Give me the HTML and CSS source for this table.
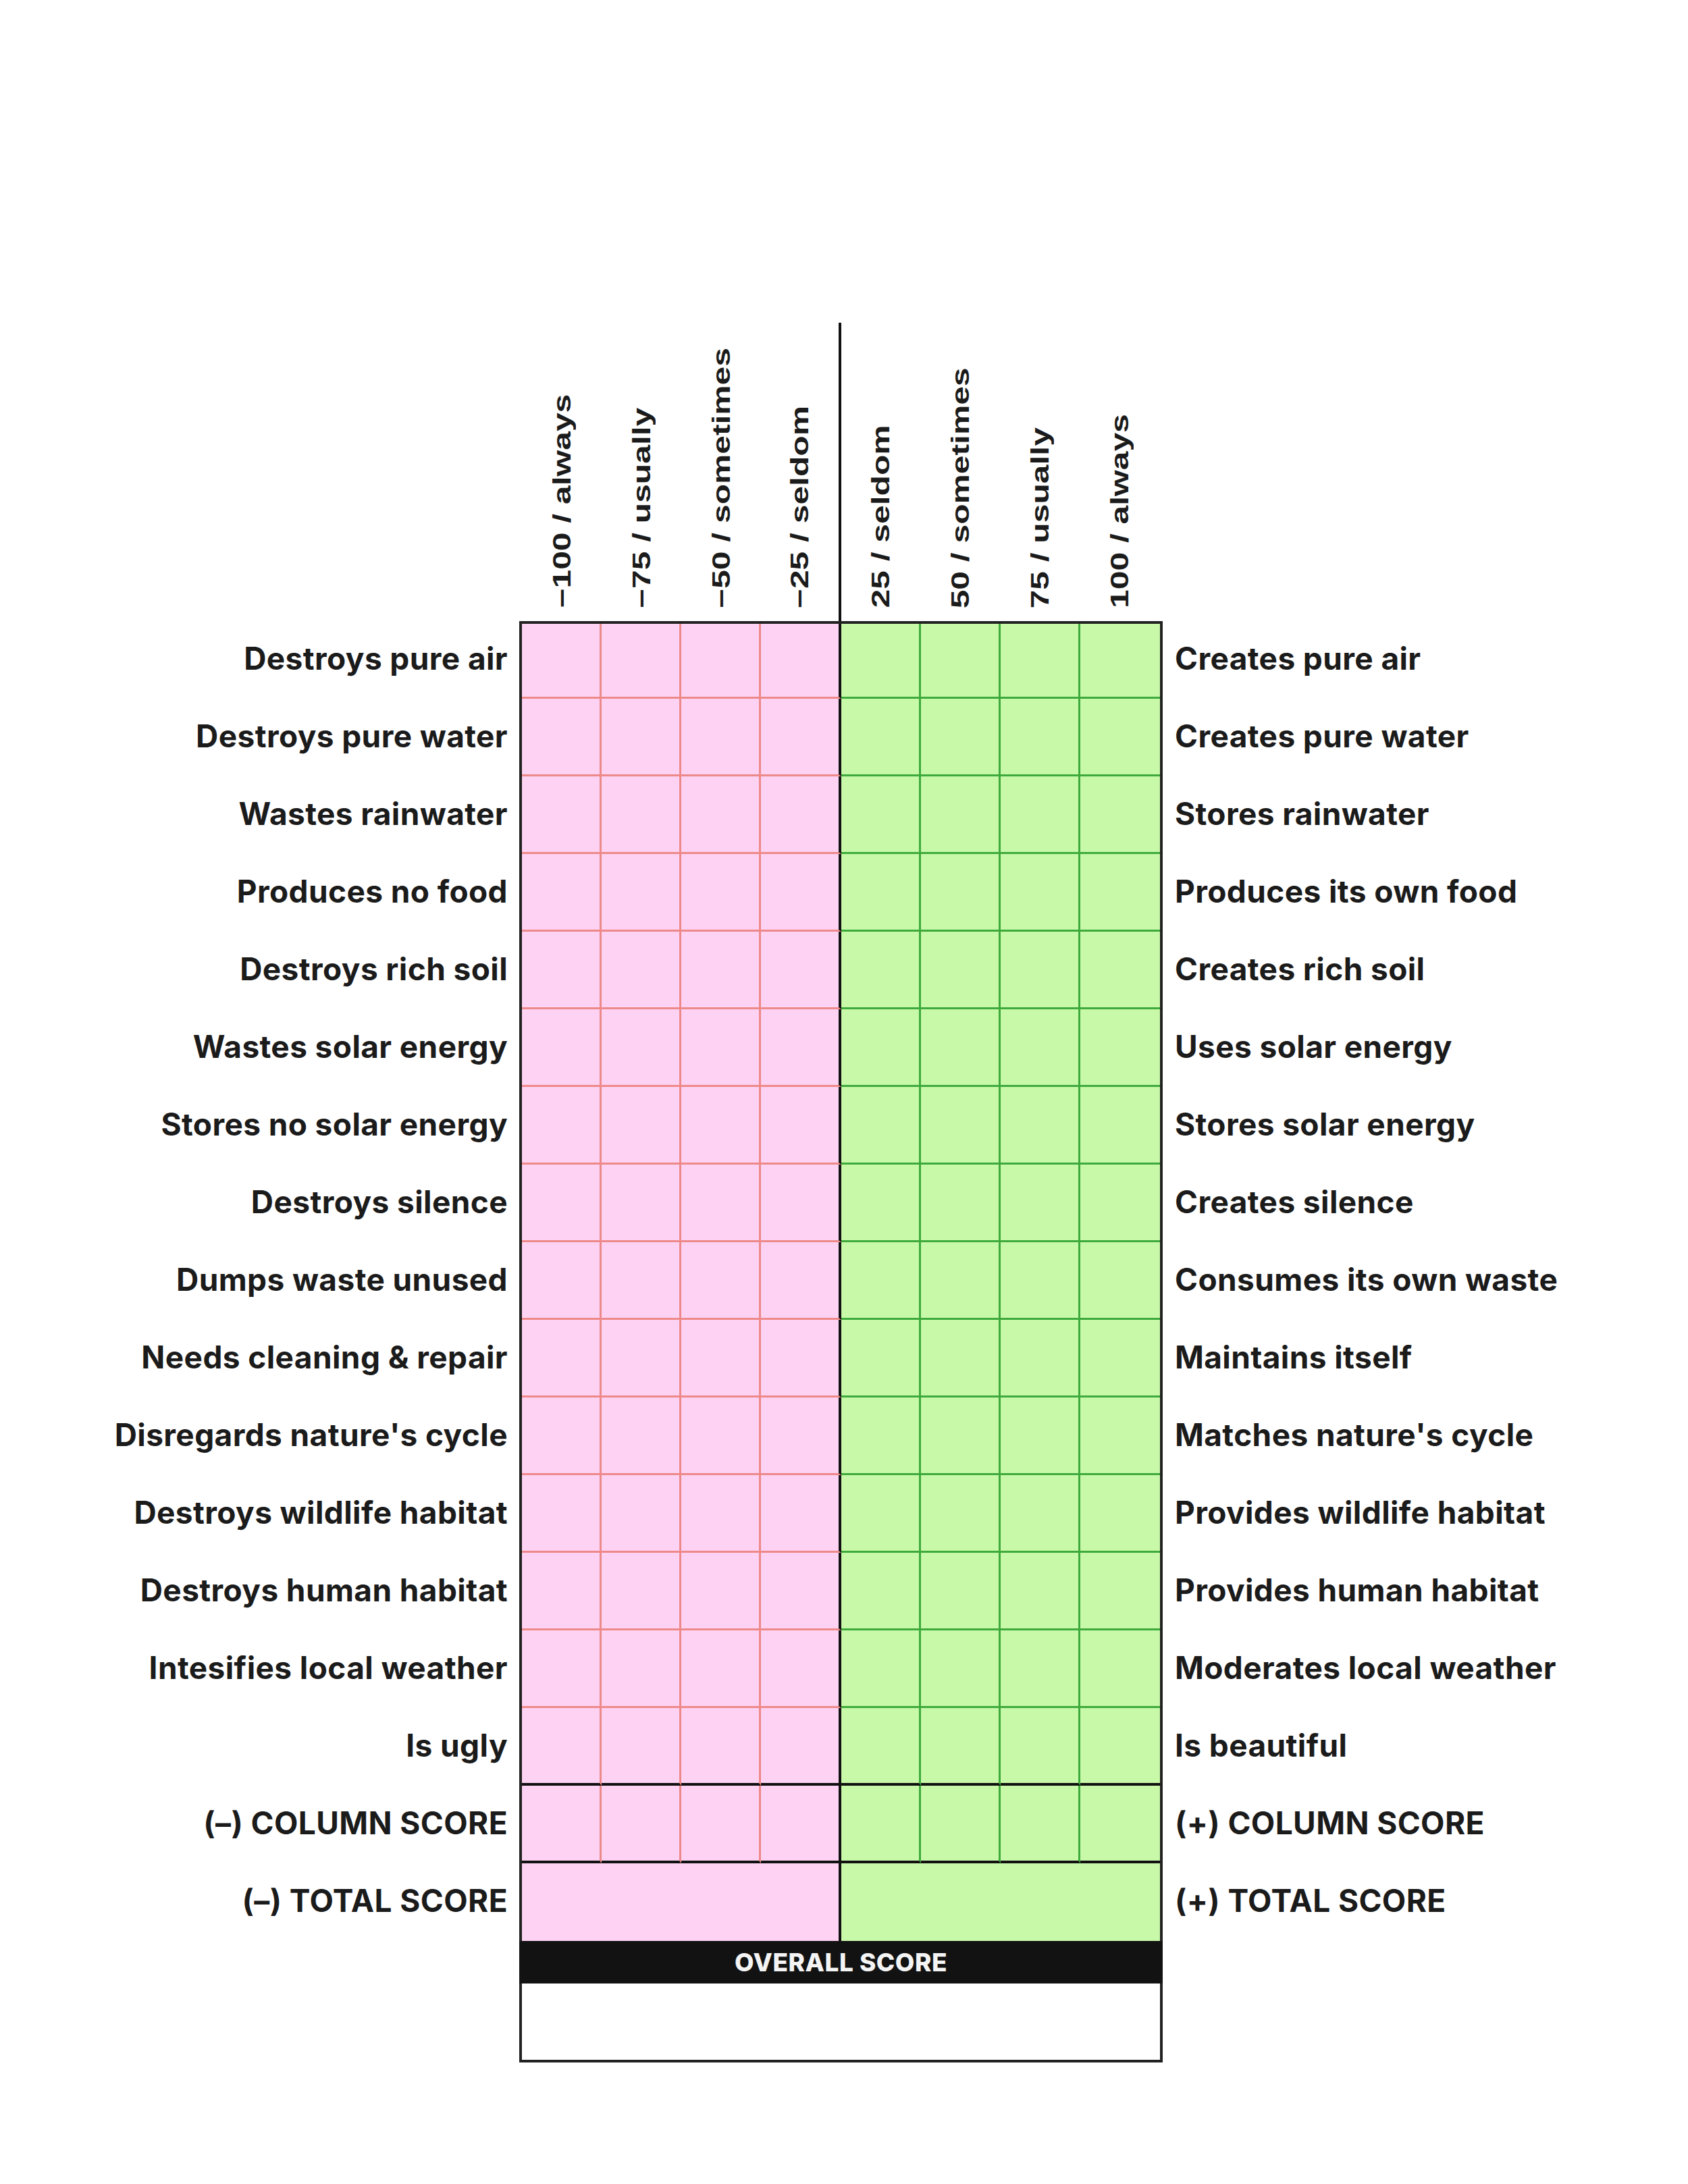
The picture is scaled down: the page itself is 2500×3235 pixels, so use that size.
FILE: index.html
```html
<!DOCTYPE html>
<html lang="en">
<head>
<meta charset="utf-8">
<title>Building performance scorecard</title>
<link rel="stylesheet" href="styles.css">
</head>
<body>
<main class="sheet">
  <div class="head">
    <div></div>
    <div class="head-cols">
      <div class="hcol"><div class="hl"><span>−100 / always</span></div></div>
      <div class="hcol"><div class="hl"><span>−75 / usually</span></div></div>
      <div class="hcol"><div class="hl"><span>−50 / sometimes</span></div></div>
      <div class="hcol mid"><div class="hl"><span>−25 / seldom</span></div></div>
      <div class="hcol"><div class="hl"><span>25 / seldom</span></div></div>
      <div class="hcol"><div class="hl"><span>50 / sometimes</span></div></div>
      <div class="hcol"><div class="hl"><span>75 / usually</span></div></div>
      <div class="hcol"><div class="hl"><span>100 / always</span></div></div>
    </div>
  </div>

  <div class="row first">
    <div class="lab lab-l">Destroys pure air</div>
    <div class="cells"><i class="c n"></i><i class="c n"></i><i class="c n"></i><i class="c n"></i><i class="c p"></i><i class="c p"></i><i class="c p"></i><i class="c p"></i></div>
    <div class="lab lab-r">Creates pure air</div>
  </div>
  <div class="row">
    <div class="lab lab-l">Destroys pure water</div>
    <div class="cells"><i class="c n"></i><i class="c n"></i><i class="c n"></i><i class="c n"></i><i class="c p"></i><i class="c p"></i><i class="c p"></i><i class="c p"></i></div>
    <div class="lab lab-r">Creates pure water</div>
  </div>
  <div class="row">
    <div class="lab lab-l">Wastes rainwater</div>
    <div class="cells"><i class="c n"></i><i class="c n"></i><i class="c n"></i><i class="c n"></i><i class="c p"></i><i class="c p"></i><i class="c p"></i><i class="c p"></i></div>
    <div class="lab lab-r">Stores rainwater</div>
  </div>
  <div class="row">
    <div class="lab lab-l">Produces no food</div>
    <div class="cells"><i class="c n"></i><i class="c n"></i><i class="c n"></i><i class="c n"></i><i class="c p"></i><i class="c p"></i><i class="c p"></i><i class="c p"></i></div>
    <div class="lab lab-r">Produces its own food</div>
  </div>
  <div class="row">
    <div class="lab lab-l">Destroys rich soil</div>
    <div class="cells"><i class="c n"></i><i class="c n"></i><i class="c n"></i><i class="c n"></i><i class="c p"></i><i class="c p"></i><i class="c p"></i><i class="c p"></i></div>
    <div class="lab lab-r">Creates rich soil</div>
  </div>
  <div class="row">
    <div class="lab lab-l">Wastes solar energy</div>
    <div class="cells"><i class="c n"></i><i class="c n"></i><i class="c n"></i><i class="c n"></i><i class="c p"></i><i class="c p"></i><i class="c p"></i><i class="c p"></i></div>
    <div class="lab lab-r">Uses solar energy</div>
  </div>
  <div class="row">
    <div class="lab lab-l">Stores no solar energy</div>
    <div class="cells"><i class="c n"></i><i class="c n"></i><i class="c n"></i><i class="c n"></i><i class="c p"></i><i class="c p"></i><i class="c p"></i><i class="c p"></i></div>
    <div class="lab lab-r">Stores solar energy</div>
  </div>
  <div class="row">
    <div class="lab lab-l">Destroys silence</div>
    <div class="cells"><i class="c n"></i><i class="c n"></i><i class="c n"></i><i class="c n"></i><i class="c p"></i><i class="c p"></i><i class="c p"></i><i class="c p"></i></div>
    <div class="lab lab-r">Creates silence</div>
  </div>
  <div class="row">
    <div class="lab lab-l">Dumps waste unused</div>
    <div class="cells"><i class="c n"></i><i class="c n"></i><i class="c n"></i><i class="c n"></i><i class="c p"></i><i class="c p"></i><i class="c p"></i><i class="c p"></i></div>
    <div class="lab lab-r">Consumes its own waste</div>
  </div>
  <div class="row">
    <div class="lab lab-l">Needs cleaning &amp; repair</div>
    <div class="cells"><i class="c n"></i><i class="c n"></i><i class="c n"></i><i class="c n"></i><i class="c p"></i><i class="c p"></i><i class="c p"></i><i class="c p"></i></div>
    <div class="lab lab-r">Maintains itself</div>
  </div>
  <div class="row">
    <div class="lab lab-l">Disregards nature's cycle</div>
    <div class="cells"><i class="c n"></i><i class="c n"></i><i class="c n"></i><i class="c n"></i><i class="c p"></i><i class="c p"></i><i class="c p"></i><i class="c p"></i></div>
    <div class="lab lab-r">Matches nature's cycle</div>
  </div>
  <div class="row">
    <div class="lab lab-l">Destroys wildlife habitat</div>
    <div class="cells"><i class="c n"></i><i class="c n"></i><i class="c n"></i><i class="c n"></i><i class="c p"></i><i class="c p"></i><i class="c p"></i><i class="c p"></i></div>
    <div class="lab lab-r">Provides wildlife habitat</div>
  </div>
  <div class="row">
    <div class="lab lab-l">Destroys human habitat</div>
    <div class="cells"><i class="c n"></i><i class="c n"></i><i class="c n"></i><i class="c n"></i><i class="c p"></i><i class="c p"></i><i class="c p"></i><i class="c p"></i></div>
    <div class="lab lab-r">Provides human habitat</div>
  </div>
  <div class="row">
    <div class="lab lab-l">Intesifies local weather</div>
    <div class="cells"><i class="c n"></i><i class="c n"></i><i class="c n"></i><i class="c n"></i><i class="c p"></i><i class="c p"></i><i class="c p"></i><i class="c p"></i></div>
    <div class="lab lab-r">Moderates local weather</div>
  </div>
  <div class="row last">
    <div class="lab lab-l">Is ugly</div>
    <div class="cells"><i class="c n"></i><i class="c n"></i><i class="c n"></i><i class="c n"></i><i class="c p"></i><i class="c p"></i><i class="c p"></i><i class="c p"></i></div>
    <div class="lab lab-r">Is beautiful</div>
  </div>
  <div class="row score">
    <div class="lab lab-l">(–) COLUMN SCORE</div>
    <div class="cells"><i class="c n"></i><i class="c n"></i><i class="c n"></i><i class="c n"></i><i class="c p"></i><i class="c p"></i><i class="c p"></i><i class="c p"></i></div>
    <div class="lab lab-r">(+) COLUMN SCORE</div>
  </div>
  <div class="row total">
    <div class="lab lab-l">(–) TOTAL SCORE</div>
    <div class="cells halves"><i class="c n wide"></i><i class="c p wide"></i></div>
    <div class="lab lab-r">(+) TOTAL SCORE</div>
  </div>

  <div class="overall">
    <div class="bar">OVERALL SCORE</div>
    <div class="box"></div>
  </div>
</main>
</body>
</html>
```

FILE: styles.css
```css
:root {
  --ink: #1b1b1b;
  --frame: #222222;
  --pink: #fdd2f3;
  --pink-line: #ee8989;
  --green: #c8f9a9;
  --green-line: #3eaa3c;
}

html, body {
  margin: 0;
  background: #ffffff;
}

body {
  font-family: Inter, "Liberation Sans", sans-serif;
  color: var(--ink);
}

.sheet {
  width: 2500px;
  height: 3235px;
  box-sizing: border-box;
  padding-top: 478px;
}

/* ---------- header ---------- */
.head {
  display: grid;
  grid-template-columns: 769px 953px;
  height: 442px;
}

.head-cols {
  display: grid;
  grid-template-columns: repeat(8, 1fr);
  padding: 0 4px;
}

.hcol {
  display: flex;
  align-items: flex-end;
  justify-content: center;
  padding-bottom: 19px;
}

.hcol.mid {
  border-right: 4px solid #111111;
}

.hl {
  writing-mode: vertical-rl;
  transform: rotate(180deg);
  font-family: "Liberation Sans", Arial, sans-serif;
  font-weight: 700;
  font-size: 37px;
  line-height: 1;
  white-space: nowrap;
  color: var(--ink);
}

.hl span {
  display: inline-block;
  transform: scaleY(1.345);
  transform-origin: top center;
}

/* ---------- rows ---------- */
.row {
  display: grid;
  grid-template-columns: 769px 953px 1fr;
  height: 115px;
}

.lab {
  display: flex;
  align-items: center;
  font-size: 46px;
  font-weight: 700;
  letter-spacing: 0.4px;
  white-space: nowrap;
  padding-bottom: 6px;
}

.lab-l {
  justify-content: flex-end;
  padding-right: 17px;
}

.lab-r {
  padding-left: 18px;
}

.cells {
  display: grid;
  grid-template-columns: repeat(8, 1fr);
  border-left: 4px solid var(--frame);
  border-right: 4px solid var(--frame);
}

.row.first .cells {
  border-top: 4px solid var(--frame);
}

.c {
  display: block;
  border-bottom: 3px solid;
  border-right: 3px solid;
}

.c.n {
  background: var(--pink);
  border-color: var(--pink-line);
}

.c.p {
  background: var(--green);
  border-color: var(--green-line);
}

.c:nth-child(4) {
  border-right: 4px solid #111111;
}

.c:nth-child(8) {
  border-right: 0;
}

.row.last .c,
.row.score .c {
  border-bottom: 4px solid #111111;
}

.cells.halves {
  grid-template-columns: 1fr 1fr;
}

.row.total .c {
  border-bottom: 0;
}

.row.total .c.wide.n {
  border-right: 4px solid #111111;
}

.row.total .c.wide.p {
  border-right: 0;
}

/* ---------- overall ---------- */
.overall {
  margin-left: 769px;
  width: 953px;
}

.bar {
  height: 63px;
  background: #121212;
  color: #f4f4f4;
  display: flex;
  align-items: center;
  justify-content: center;
  font-size: 37px;
  font-weight: 800;
  letter-spacing: 0.5px;
}

.box {
  height: 117px;
  box-sizing: border-box;
  border: 4px solid var(--frame);
  border-top: 0;
  background: #ffffff;
}
```
